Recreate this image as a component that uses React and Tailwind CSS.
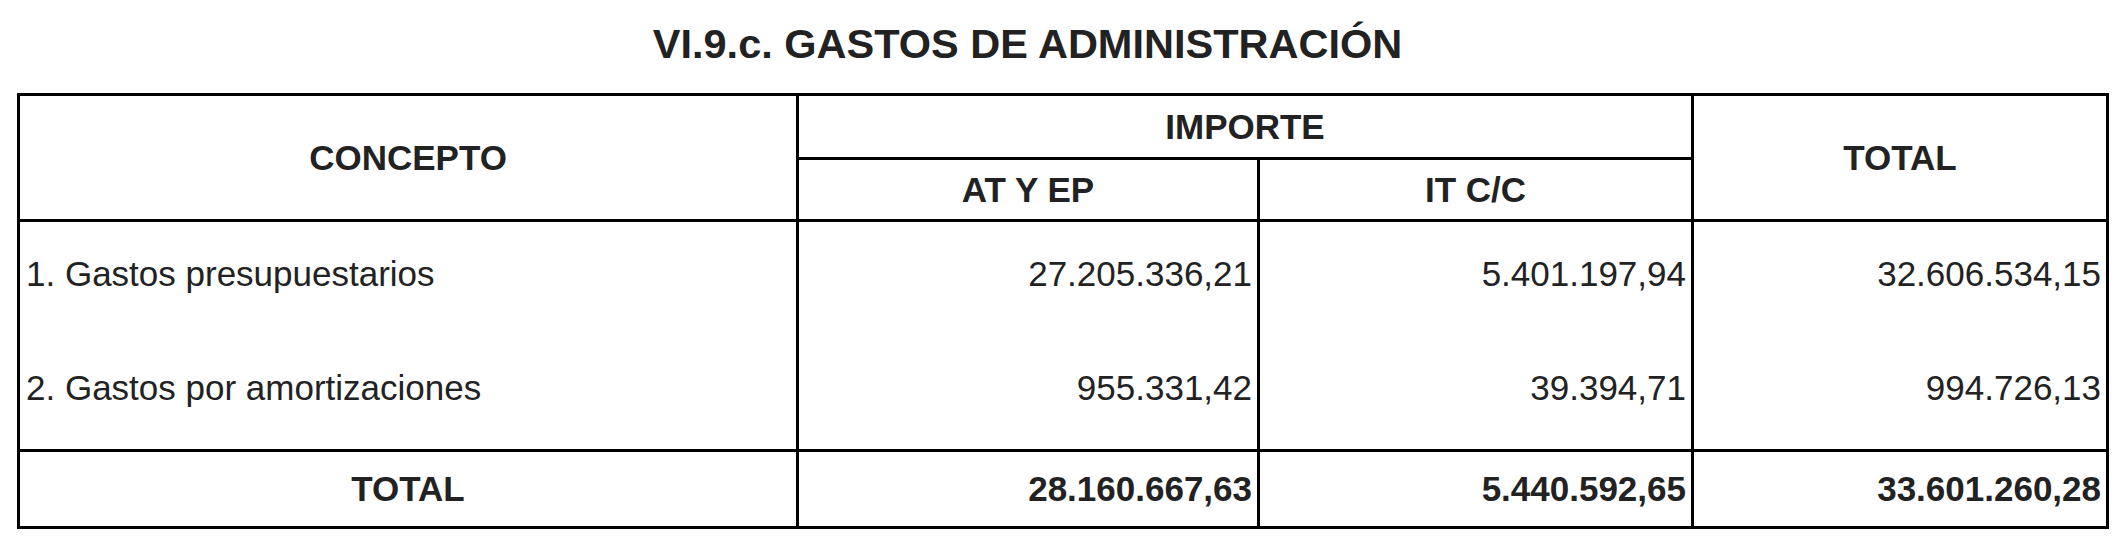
export default function App() {
  const font = { fontFamily: '"Liberation Sans", Arial, sans-serif' };
  const cell = "bg-white flex items-center text-[35px] leading-[40px] text-[#222]";
  return (
    <div className="w-[2126px] h-[555px] bg-white" style={font}>
      <div className="flex justify-center pr-[71px] pt-[20px]">
        <h1 className="text-[41.5px] leading-[48px] font-bold text-[#222]">
          VI.9.c. GASTOS DE ADMINISTRACIÓN
        </h1>
      </div>
      <div className="mt-[25px] ml-[17px] w-[2092px] bg-black p-[3px] grid grid-cols-[776px_458px_431px_412px] grid-rows-[61px_59px_227px_74px] gap-[3px]">
        <div className={`${cell} row-span-2 justify-center font-bold`}>CONCEPTO</div>
        <div className={`${cell} col-span-2 justify-center font-bold`}>IMPORTE</div>
        <div className={`${cell} row-span-2 justify-center font-bold`}>TOTAL</div>
        <div className={`${cell} justify-center font-bold`}>AT Y EP</div>
        <div className={`${cell} justify-center font-bold`}>IT C/C</div>

        <div className="bg-white flex flex-col text-[35px] leading-[40px] text-[#222]">
          <div className="h-[104px] flex items-center pl-[6px]">1. Gastos presupuestarios</div>
          <div className="h-[123px] flex items-center pl-[6px]">2. Gastos por amortizaciones</div>
        </div>
        <div className="bg-white flex flex-col text-[35px] leading-[40px] text-[#222]">
          <div className="h-[104px] flex items-center justify-end pr-[5px]">27.205.336,21</div>
          <div className="h-[123px] flex items-center justify-end pr-[5px]">955.331,42</div>
        </div>
        <div className="bg-white flex flex-col text-[35px] leading-[40px] text-[#222]">
          <div className="h-[104px] flex items-center justify-end pr-[5px]">5.401.197,94</div>
          <div className="h-[123px] flex items-center justify-end pr-[5px]">39.394,71</div>
        </div>
        <div className="bg-white flex flex-col text-[35px] leading-[40px] text-[#222]">
          <div className="h-[104px] flex items-center justify-end pr-[5px]">32.606.534,15</div>
          <div className="h-[123px] flex items-center justify-end pr-[5px]">994.726,13</div>
        </div>

        <div className={`${cell} justify-center font-bold`}>TOTAL</div>
        <div className={`${cell} justify-end pr-[5px] font-bold`}>28.160.667,63</div>
        <div className={`${cell} justify-end pr-[5px] font-bold`}>5.440.592,65</div>
        <div className={`${cell} justify-end pr-[5px] font-bold`}>33.601.260,28</div>
      </div>
    </div>
  );
}
